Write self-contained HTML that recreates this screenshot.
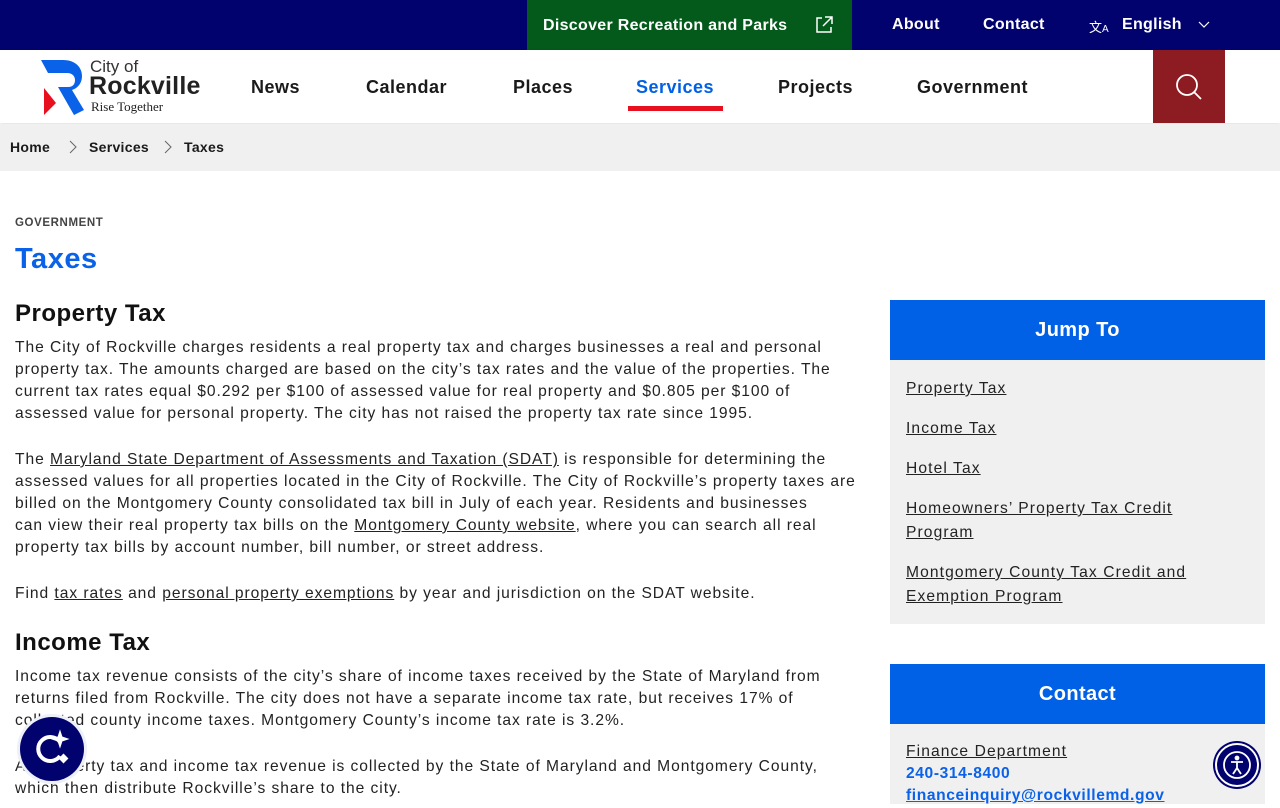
<!DOCTYPE html>
<html><head><meta charset="utf-8"><style>
*{margin:0;padding:0;box-sizing:border-box}
body{width:1280px;height:800px;overflow:hidden;font-family:"Liberation Sans",sans-serif;color:#1a1a1a;background:#fff;position:relative}
.abs{position:absolute;white-space:nowrap}
.top{position:absolute;left:0;top:0;width:1280px;height:50px;background:#02026f}
.disc{position:absolute;left:527px;top:0;width:325px;height:50px;background:#045a1a;color:#fff;font-weight:bold;font-size:16px;line-height:50px;padding-left:16px;letter-spacing:.3px}
.tl{color:#fff;font-weight:bold;font-size:16px;top:16px;letter-spacing:.3px}
.hdr{position:absolute;top:50px;left:0;width:1280px;height:73px;background:#fff;box-shadow:0 1px 3px rgba(0,0,0,.15)}
.nav{font-weight:bold;font-size:18px;top:77px;color:#1a1a1a;letter-spacing:.5px}
.crumb{position:absolute;top:124px;left:0;width:1280px;height:47px;background:#f0f0f0}
.cb{font-weight:bold;font-size:14px;top:139px;letter-spacing:.3px}
p.t{position:absolute;left:15px;font-size:15.6px;line-height:22px;letter-spacing:.95px;white-space:nowrap;color:#222}
a{color:#222;text-decoration:underline}
h2{position:absolute;left:15px;font-size:24px;font-weight:bold;color:#111;letter-spacing:.5px}
.box{position:absolute;left:890px;width:375px;background:#f0f0f0}
.bh{height:60px;background:#0060e6;color:#fff;font-weight:bold;font-size:20px;text-align:center;line-height:60px;letter-spacing:.4px}
.jl{position:absolute;left:906px;font-size:15.6px;line-height:24px;white-space:nowrap;letter-spacing:1.1px}
</style></head><body>
<div class="top"></div>
<div class="disc" style="line-height:52px">Discover Recreation and Parks
<svg style="position:absolute;left:288px;top:16px" width="18" height="18" viewBox="0 0 18 18" fill="none" stroke="#fff" stroke-width="1.5"><path d="M7 2H2v14h14v-5M10 1h7v7M17 1L8 10"/></svg></div>
<div class="abs tl" style="left:892px">About</div>
<div class="abs tl" style="left:983px">Contact</div>
<div class="abs" style="left:1089px;top:17px;color:#fff;font-size:13px">文<span style="font-size:10px">A</span></div>
<div class="abs tl" style="left:1122px">English</div>
<svg class="abs" style="left:1198px;top:21px" width="12" height="8" viewBox="0 0 12 8" fill="none" stroke="#fff" stroke-width="1.2"><path d="M1 1l5 5 5-5"/></svg>
<div class="hdr"></div>
<svg class="abs" style="left:38px;top:58px" width="50" height="58" viewBox="0 0 50 58">
<path d="M3 2h22c13 0 19 8 19 16 0 7-4 12-10 14l12 20-10 5-16-28h10c5 0 7-3 7-7s-3-7-8-7H10z" fill="#0a62e8"/>
<path d="M6 30l12 15-12 12z" fill="#e8101e"/></svg>
<div class="abs" style="left:90px;top:57px;font-size:17px;color:#333">City of</div>
<div class="abs" style="left:89px;top:72px;font-size:25px;font-weight:bold;color:#222;letter-spacing:.2px">Rockville</div>
<div class="abs" style="left:91px;top:99px;font-size:13px;font-family:'Liberation Serif',serif;color:#222">Rise Together</div>
<div class="abs nav" style="left:251px">News</div>
<div class="abs nav" style="left:366px">Calendar</div>
<div class="abs nav" style="left:513px">Places</div>
<div class="abs nav" style="left:636px;color:#0060e6">Services</div>
<div class="abs" style="left:628px;top:106px;width:95px;height:5px;background:#e8101e"></div>
<div class="abs nav" style="left:778px">Projects</div>
<div class="abs nav" style="left:917px">Government</div>
<div class="abs" style="left:1153px;top:50px;width:72px;height:73px;background:#8d1c22"></div>
<svg class="abs" style="left:1175px;top:73px" width="28" height="28" viewBox="0 0 28 28" fill="none" stroke="#fff" stroke-width="1.8"><circle cx="12" cy="12" r="10"/><path d="M19 19l7 7"/></svg>
<div class="crumb"></div>
<div class="abs cb" style="left:10px">Home</div>
<svg class="abs" style="left:69px;top:140px" width="8" height="14" viewBox="0 0 8 14" fill="none" stroke="#666"><path d="M1 1l6 6-6 6"/></svg>
<div class="abs cb" style="left:89px">Services</div>
<svg class="abs" style="left:164px;top:140px" width="8" height="14" viewBox="0 0 8 14" fill="none" stroke="#666"><path d="M1 1l6 6-6 6"/></svg>
<div class="abs cb" style="left:184px">Taxes</div>
<div class="abs" style="left:15px;top:217px;font-size:11.5px;font-weight:bold;color:#444;letter-spacing:.6px">GOVERNMENT</div>
<div class="abs" style="left:15px;top:243px;font-size:29px;font-weight:bold;color:#0a62e8;letter-spacing:.5px">Taxes</div>
<h2 style="top:300px">Property Tax</h2>
<p class="t" style="top:337px">The City of Rockville charges residents a real property tax and charges businesses a real and personal<br>property tax. The amounts charged are based on the city’s tax rates and the value of the properties. The<br>current tax rates equal $0.292 per $100 of assessed value for real property and $0.805 per $100 of<br>assessed value for personal property. The city has not raised the property tax rate since 1995.</p>
<p class="t" style="top:449px">The <a>Maryland State Department of Assessments and Taxation (SDAT)</a> is responsible for determining the<br>assessed values for all properties located in the City of Rockville. The City of Rockville’s property taxes are<br>billed on the Montgomery County consolidated tax bill in July of each year. Residents and businesses<br>can view their real property tax bills on the <a>Montgomery County website</a>, where you can search all real<br>property tax bills by account number, bill number, or street address.</p>
<p class="t" style="top:583px">Find <a>tax rates</a> and <a>personal property exemptions</a> by year and jurisdiction on the SDAT website.</p>
<h2 style="top:629px">Income Tax</h2>
<p class="t" style="top:666px">Income tax revenue consists of the city’s share of income taxes received by the State of Maryland from<br>returns filed from Rockville. The city does not have a separate income tax rate, but receives 17% of<br>collected county income taxes. Montgomery County’s income tax rate is 3.2%.</p>
<p class="t" style="top:756px">All property tax and income tax revenue is collected by the State of Maryland and Montgomery County,<br>which then distribute Rockville’s share to the city.</p>
<div class="box" style="top:300px;height:324px"><div class="bh">Jump To</div></div>
<a class="jl" style="top:377px">Property Tax</a>
<a class="jl" style="top:417px">Income Tax</a>
<a class="jl" style="top:457px">Hotel Tax</a>
<div class="jl" style="top:497px"><a>Homeowners’ Property Tax Credit<br>Program</a></div>
<div class="jl" style="top:561px"><a>Montgomery County Tax Credit and<br>Exemption Program</a></div>
<div class="box" style="top:664px;height:140px"><div class="bh">Contact</div></div>
<a class="jl" style="top:740px">Finance Department</a>
<div class="jl" style="top:762px;color:#0a62e8;font-weight:bold;letter-spacing:.6px">240-314-8400</div>
<div class="jl" style="top:784px;color:#0a62e8;font-weight:bold;text-decoration:underline;letter-spacing:.6px">financeinquiry@rockvillemd.gov</div>
<div class="abs" style="left:17px;top:714px;width:70px;height:70px;border-radius:50%;background:#eef0f8"></div>
<div class="abs" style="left:20px;top:717px;width:64px;height:64px;border-radius:50%;background:#02026f"></div>
<svg class="abs" style="left:20px;top:717px" width="64" height="64" viewBox="0 0 64 64" fill="none" stroke="#fff" stroke-width="4"><path d="M40 25a12 12 0 1 0 0 14"/><path d="M38 20l2-6 2 6 6 2-6 2-2 6-2-6-6-2z" fill="#fff" stroke-width="1"/><rect x="40" y="38" width="7" height="7" transform="rotate(45 43.5 41.5)" fill="#fff" stroke="none"/></svg>
<div class="abs" style="left:1215px;top:743px;width:44px;height:44px;border-radius:50%;background:#02026f;border:2px solid #fff;box-shadow:0 0 0 2px #02026f"></div>
<svg class="abs" style="left:1222px;top:750px" width="30" height="30" viewBox="0 0 30 30" fill="none" stroke="#fff" stroke-width="1.8"><circle cx="15" cy="15" r="13"/><circle cx="15" cy="8" r="1.5" fill="#fff"/><path d="M9 12h12M15 12v6l-4 6M15 18l4 6"/></svg>
</body></html>
